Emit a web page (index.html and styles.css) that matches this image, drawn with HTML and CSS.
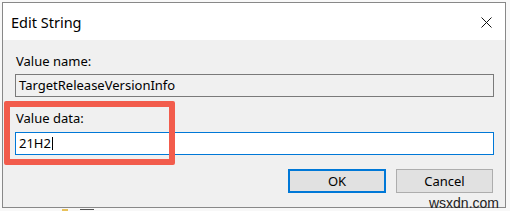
FILE: index.html
```html
<!DOCTYPE html>
<html lang="en">
  <head>
    <meta charset="UTF-8" />
    <title>Edit String</title>
    <link rel="stylesheet" href="styles.css">
  </head>
  <body>
    <div class="dialog">
      <div class="title-bar">
        <span class="title">Edit String</span>
        <span class="close">
          <svg width="11" height="11" viewBox="0 0 11 11">
            <path d="M0.5 0.5 L10.5 10.5 M10.5 0.5 L0.5 10.5" stroke="#111" stroke-width="1" fill="none" />
          </svg>
        </span>
      </div>
      <div class="content">
        <div class="field-label">Value name:</div>
        <div class="field field-readonly">TargetReleaseVersionInfo</div>
        <div class="field-label second">Value data:</div>
        <div class="field field-active">21H2<span class="caret"></span></div>
        <div class="buttons">
          <div class="btn btn-default">OK</div>
          <div class="btn">Cancel</div>
        </div>
        <div class="highlight"></div>
      </div>
      <div class="watermark">wsxdn.com</div>
    </div>
    <div class="behind">
      <span class="folder"></span>
      <span class="behind-mark"></span>
    </div>
  </body>
</html>
```

FILE: styles.css
```css
body {
  margin: 0;
  background-color: #f8f8f8;
  font-family: "Noto Sans", "Liberation Sans", sans-serif;
  color: #000;
  overflow: hidden;
}
.dialog {
  position: relative;
  box-sizing: border-box;
  margin: 2px 0 0 2px;
  width: 504px;
  height: 206px;
  border: 1px solid #888;
  background-color: #f0f0f0;
}
.title-bar {
  height: 37px;
  background-color: #fff;
  display: flex;
  align-items: center;
  justify-content: space-between;
  padding: 0 13px 0 8px;
}
.title {
  font-size: 14.5px;
}
.close {
  display: flex;
  margin-top: 1px;
}
.content {
  position: relative;
  padding: 13px 11px 0 12px;
}
.field-label {
  font-size: 13px;
  line-height: 16px;
  padding-left: 1px;
}
.field-label.second {
  margin-top: 13px;
}
.field {
  box-sizing: border-box;
  height: 23px;
  margin-top: 5px;
  font-size: 13px;
  line-height: 21px;
  padding-left: 3px;
  display: flex;
  align-items: center;
}
.field-readonly {
  border: 1px solid #7a7a7a;
  background-color: #f0f0f0;
}
.field-active {
  margin-top: 6px;
  border: 1px solid #0078d7;
  background-color: #fff;
}
.caret {
  display: inline-block;
  width: 1px;
  height: 13px;
  background-color: #000;
  margin-left: 1px;
}
.buttons {
  display: flex;
  justify-content: flex-end;
  gap: 10px;
  margin-top: 14px;
  padding-right: 1px;
}
.btn {
  box-sizing: border-box;
  width: 97px;
  height: 24px;
  border: 1px solid #adadad;
  background-color: #e1e1e1;
  font-size: 13px;
  display: flex;
  align-items: center;
  justify-content: center;
}
.btn-default {
  width: 98px;
  border: 2px solid #0078d7;
}
.highlight {
  position: absolute;
  left: 1px;
  top: 61px;
  width: 171px;
  height: 64px;
  box-sizing: border-box;
  border: 6px solid #f25c4c;
  border-radius: 2px;
}
.watermark {
  position: absolute;
  right: 6px;
  bottom: -4px;
  font-size: 14px;
  line-height: 16px;
  color: #222;
  font-family: "Liberation Sans", sans-serif;
}
.behind {
  display: flex;
  align-items: flex-start;
  gap: 12px;
  margin: 1px 0 0 62px;
  height: 3px;
}
.folder {
  width: 6px;
  height: 3px;
  background-color: #e8c15a;
}
.behind-mark {
  width: 14px;
  height: 2px;
  border-top: 1px solid #555;
}
```
